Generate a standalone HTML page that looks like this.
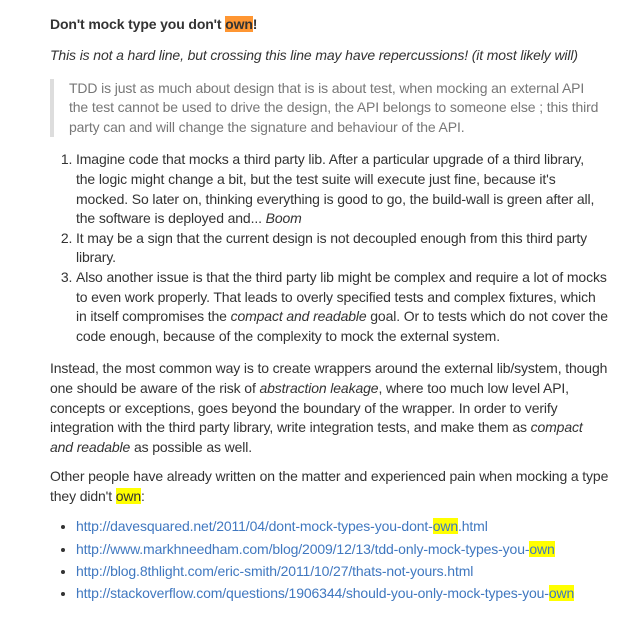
<!DOCTYPE html>
<html><head><meta charset="utf-8"><style>
body{margin:0;background:#fff;font-family:"Liberation Sans",Arial,sans-serif;font-size:14px;color:#333;line-height:19.6px;letter-spacing:-0.13px;}
.w{position:absolute;left:50px;top:14px;width:570px;white-space:nowrap;}
p{margin:0 0 13px 0;}
p.b{margin-bottom:10px;}
h4{font-size:14px;margin:0 0 12px 0;font-weight:bold;line-height:20px;}
.o{background:#ff9632;}
.y{background:#ffff00;}
blockquote{margin:0 0 13px 0;padding:0 0 0 15px;border-left:4px solid #ddd;color:#777;}
ol{margin:0 0 13px 0;padding-left:26px;}
ul{margin:-4px 0 0 0;padding-left:26px;}
ul li{line-height:22.3px;}
a{color:#4078c0;text-decoration:none;}
</style></head><body><div class="w">
<h4>Don't mock type you don't <span class="o">own</span>!</h4>
<p><em>This is not a hard line, but crossing this line may have repercussions! (it most likely will)</em></p>
<blockquote>TDD is just as much about design that is is about test, when mocking an external API<br>the test cannot be used to drive the design, the API belongs to someone else ; this third<br>party can and will change the signature and behaviour of the API.</blockquote>
<ol>
<li>Imagine code that mocks a third party lib. After a particular upgrade of a third library,<br>the logic might change a bit, but the test suite will execute just fine, because it's<br>mocked. So later on, thinking everything is good to go, the build-wall is green after all,<br>the software is deployed and... <em>Boom</em></li>
<li>It may be a sign that the current design is not decoupled enough from this third party<br>library.</li>
<li>Also another issue is that the third party lib might be complex and require a lot of mocks<br>to even work properly. That leads to overly specified tests and complex fixtures, which<br>in itself compromises the <em>compact and readable</em> goal. Or to tests which do not cover the<br>code enough, because of the complexity to mock the external system.</li>
</ol>
<p class="b">Instead, the most common way is to create wrappers around the external lib/system, though<br>one should be aware of the risk of <em>abstraction leakage</em>, where too much low level API,<br>concepts or exceptions, goes beyond the boundary of the wrapper. In order to verify<br>integration with the third party library, write integration tests, and make them as <em>compact<br>and readable</em> as possible as well.</p>
<p>Other people have already written on the matter and experienced pain when mocking a type<br>they didn't <span class="y">own</span>:</p>
<ul>
<li><a>http://davesquared.net/2011/04/dont-mock-types-you-dont-<span class="y">own</span>.html</a></li>
<li><a>http://www.markhneedham.com/blog/2009/12/13/tdd-only-mock-types-you-<span class="y">own</span></a></li>
<li><a>http://blog.8thlight.com/eric-smith/2011/10/27/thats-not-yours.html</a></li>
<li><a>http://stackoverflow.com/questions/1906344/should-you-only-mock-types-you-<span class="y">own</span></a></li>
</ul>
</div></body></html>
